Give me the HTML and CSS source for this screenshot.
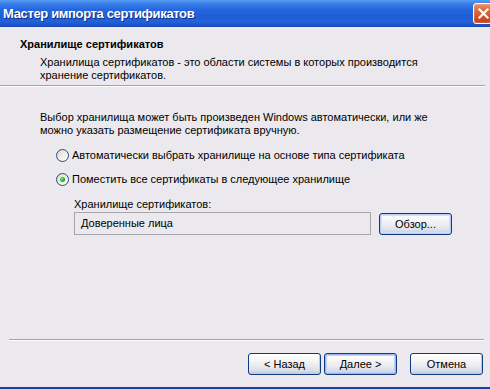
FILE: index.html
```html
<!DOCTYPE html>
<html lang="ru">
<head>
  <meta charset="UTF-8">
  <title>Мастер импорта сертификатов</title>
  <link rel="stylesheet" href="styles.css">
</head>
<body>
  <div class="window">
    <div class="titlebar">
      <span class="title">Мастер импорта сертификатов</span>
      <span class="close-btn">
        <svg width="13" height="13" viewBox="0 0 13 13">
          <path d="M2.5 2.5L10.5 10.5M10.5 2.5L2.5 10.5" stroke="#fff" stroke-width="2.2" stroke-linecap="square"/>
        </svg>
      </span>
    </div>

    <div class="client">
      <div class="header">
        <div class="header-title">Хранилище сертификатов</div>
        <div class="header-desc">Хранилища сертификатов - это области системы в которых производится<br>хранение сертификатов.</div>
      </div>
      <div class="separator header-sep"></div>

      <div class="page">
        <p class="intro">Выбор хранилища может быть произведен Windows автоматически, или же<br>можно указать размещение сертификата вручную.</p>

        <div class="options">
          <div class="radio">
            <span class="radio-box"></span>
            Автоматически выбрать хранилище на основе типа сертификата
          </div>
          <div class="radio checked">
            <span class="radio-box"></span>
            Поместить все сертификаты в следующее хранилище
          </div>
        </div>

        <div class="store">
          <div class="store-label">Хранилище сертификатов:</div>
          <div class="store-row">
            <div class="store-field">Доверенные лица</div>
            <button class="btn browse-btn">Обзор...</button>
          </div>
        </div>
      </div>

      <div class="separator footer-sep"></div>
      <div class="footer">
        <button class="btn">&lt; Назад</button>
        <button class="btn default">Далее &gt;</button>
        <button class="btn cancel-btn">Отмена</button>
      </div>
    </div>
  </div>
</body>
</html>
```

FILE: styles.css
```css
:root {
  --face: #ebe9ed;
  --text: #000;
  --line-dark: #a3a2a6;
  --line-light: #fff;
  --frame: #1c3fa2;
}

html, body {
  margin: 0;
  padding: 0;
  overflow: hidden;
  background: var(--face);
}

body {
  font-family: 'Liberation Sans', Arial, sans-serif;
  font-size: 11px;
  line-height: 13px;
  color: var(--text);
}

.window {
  width: 496px;
  height: 389px;
  display: flex;
  flex-direction: column;
  background: var(--face);
}

/* title bar */
.titlebar {
  height: 27px;
  flex: none;
  display: flex;
  align-items: flex-start;
  background: linear-gradient(to bottom, #5a9df4 0%, #3a82ec 12%, #2567de 35%, #1f5dd6 60%, #2362da 80%, #1e55c8 92%, #1a47b0 100%);
}

.title {
  padding: 6px 0 0 3px;
  font-size: 13px;
  line-height: 15px;
  font-weight: 700;
  letter-spacing: -0.35px;
  color: #fff;
  text-shadow: 1px 1px 0 #0f2f86;
}

.close-btn {
  margin: 3px 2px 0 auto;
  width: 19px;
  height: 19px;
  border: 1px solid #fff;
  border-radius: 3px;
  display: flex;
  align-items: center;
  justify-content: center;
  background: linear-gradient(to bottom, #e9906e 0%, #dc6338 40%, #cc4a20 80%, #c0451f 100%);
  box-shadow: inset 0 0 2px rgba(255, 255, 255, 0.5);
}

/* client area */
.client {
  flex: 1;
  display: flex;
  flex-direction: column;
  border-bottom: 2px solid var(--frame);
}

.header {
  height: 58px;
  padding: 11px 0 0 20px;
  box-sizing: border-box;
}

.header-title {
  font-weight: 700;
}

.header-desc {
  margin: 5px 0 0 20px;
}

.separator {
  height: 0;
  border-top: 1px solid var(--line-dark);
  border-bottom: 1px solid var(--line-light);
}

.header-sep {
  margin-right: 11px;
}

.page {
  height: 252px;
  padding: 24px 0 0 40px;
  box-sizing: border-box;
}

.intro {
  margin: 0;
}

.options {
  margin: 12px 0 0 16px;
  display: flex;
  flex-direction: column;
  gap: 11px;
}

.radio {
  display: flex;
  align-items: center;
  gap: 3px;
  height: 13px;
}

.radio-box {
  width: 11px;
  height: 11px;
  border: 1px solid #1c5180;
  border-radius: 50%;
  background: linear-gradient(135deg, #d6d4cc 0%, #f1f0ea 55%, #fff 100%);
  display: flex;
  align-items: center;
  justify-content: center;
}

.radio.checked .radio-box::after {
  content: "";
  width: 5px;
  height: 5px;
  border-radius: 50%;
  background: radial-gradient(circle at 35% 35%, #8be08b 0%, #2fb22f 50%, #16891b 100%);
}

.store {
  margin: 12px 0 0 34px;
}

.store-row {
  margin-top: 1px;
  display: flex;
  align-items: flex-start;
  gap: 8px;
}

.store-field {
  width: 297px;
  height: 23px;
  padding: 4px 0 0 6px;
  box-sizing: border-box;
  border: 1px solid #a7a6aa;
  background: var(--face);
}

/* buttons */
.btn {
  width: 73px;
  height: 22px;
  padding: 0;
  font-family: inherit;
  font-size: 11px;
  color: #000;
  border: 1px solid #0f3a80;
  border-radius: 3px;
  background: linear-gradient(to bottom, #fff 0%, #f6f6f8 30%, #eaebf0 60%, #d8dce8 85%, #bcc4d8 100%);
  box-shadow: inset -1px -1px 0 #c6cbdc;
}

.browse-btn {
  margin-top: 1px;
  box-shadow: inset 0 0 0 1px #b8cdf5, inset 0 0 0 2px #d3def9;
}

.btn.default {
  box-shadow: inset 0 0 0 1px #98b6f1, inset 0 0 0 2px #bfd1f7;
}

.footer-sep {
  margin: 0 12px 0 9px;
}

.footer {
  display: flex;
  gap: 3px;
  padding: 12px 13px 0 0;
  justify-content: flex-end;
}

.cancel-btn {
  margin-left: 10px;
}
```
